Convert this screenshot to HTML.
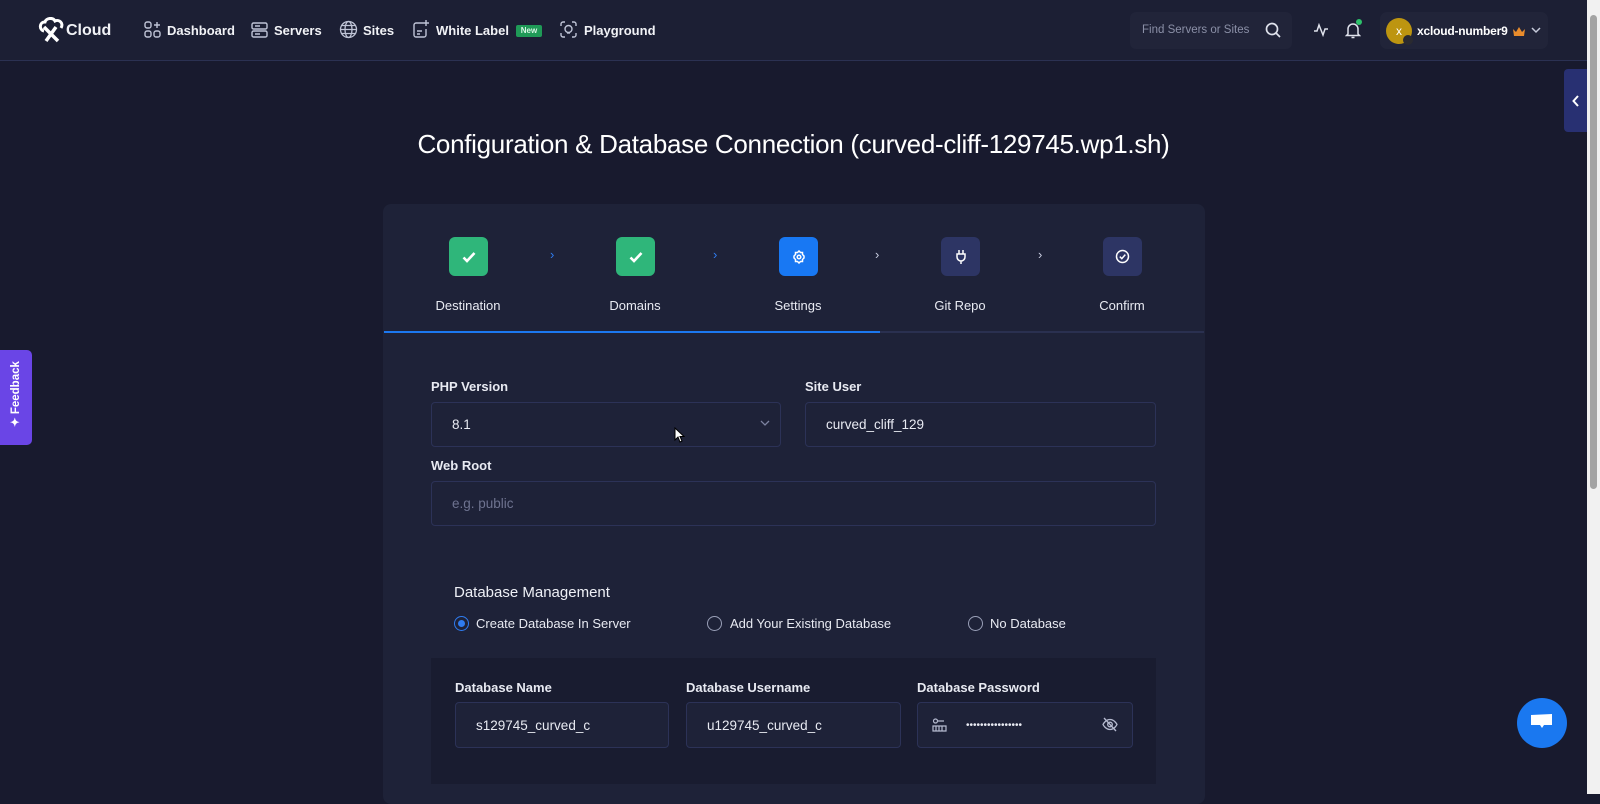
<!DOCTYPE html>
<html><head><meta charset="utf-8"><style>
*{box-sizing:border-box;margin:0;padding:0}
body{width:1600px;height:794px;overflow:hidden;background:#181a2e;font-family:"Liberation Sans",sans-serif;color:#fff;position:relative}
.abs{position:absolute}
.nav{left:0;top:0;width:1587px;height:61px;background:#1c1f34;border-bottom:1px solid #2b3152}
.nl{position:absolute;top:23px;font-size:13px;font-weight:bold;color:#f1f2f6}
.ic{position:absolute;top:21px}
.lbl{position:absolute;font-size:13px;font-weight:bold;color:#e8eaf2}
.inp{position:absolute;border:1px solid #2c3257;border-radius:4px;background:#1e2238;font-size:13.5px;color:#e8eaf2;padding-left:20px;display:flex;align-items:center}
.step{position:absolute;top:237px;width:39px;height:39px;border-radius:6px;display:flex;align-items:center;justify-content:center}
.sl{position:absolute;top:298px;font-size:13px;color:#e8eaf2;transform:translateX(-50%)}
.arr{position:absolute;top:247px;font-size:13px}
.radio{position:absolute;top:616px;width:15px;height:15px;border-radius:50%;border:1.5px solid #9aa0b8}
.rt{position:absolute;top:616px;font-size:13px;color:#e8eaf2}
</style></head><body>
<div class="abs nav"></div>
<svg class="abs" style="left:38px;top:17px" width="28" height="26" viewBox="0 0 28 26"><path d="M6 14 C1 13 1 5 7 5 C8 1 15 0 17 4 C21 2 26 6 23 11" fill="none" stroke="#fff" stroke-width="3"/><path d="M6 10 L20 24 M18 10 L8 24" stroke="#fff" stroke-width="3.5"/></svg>
<div class="nl" style="left:66px;top:22px;font-size:16px">Cloud</div>
<svg class="ic" style="left:144px" width="17" height="17" viewBox="0 0 17 17" fill="none" stroke="#bfc4d6" stroke-width="1.4"><rect x="1" y="1" width="6" height="6" rx="2"/><rect x="1" y="10" width="6" height="6" rx="2"/><rect x="10" y="10" width="6" height="6" rx="2"/><path d="M13 1v6M10 4h6"/></svg>
<div class="nl" style="left:167px">Dashboard</div>
<svg class="ic" style="left:251px" width="17" height="17" viewBox="0 0 17 17" fill="none" stroke="#bfc4d6" stroke-width="1.4"><rect x="1" y="2" width="15" height="6" rx="1.5"/><rect x="1" y="10" width="15" height="6" rx="1.5"/><path d="M4 5h5M4 13h5"/></svg>
<div class="nl" style="left:274px">Servers</div>
<svg class="ic" style="left:339px;top:20px" width="19" height="19" viewBox="0 0 19 19" fill="none" stroke="#bfc4d6" stroke-width="1.3"><circle cx="9.5" cy="9.5" r="8"/><ellipse cx="9.5" cy="9.5" rx="3.5" ry="8"/><path d="M1.5 9.5h16M2.5 5.5h14M2.5 13.5h14"/></svg>
<div class="nl" style="left:363px">Sites</div>
<svg class="ic" style="left:412px;top:19px" width="18" height="20" viewBox="0 0 18 20" fill="none" stroke="#bfc4d6" stroke-width="1.4"><path d="M11 4H4a2 2 0 0 0-2 2v10a2 2 0 0 0 2 2h8a2 2 0 0 0 2-2V10"/><path d="M14 1v6M11 4h6M5 12h5M5 15h3"/></svg>
<div class="nl" style="left:436px">White Label</div>
<div class="abs" style="left:516px;top:25px;width:26px;height:12px;background:#1f9a57;border-radius:2px;font-size:8px;font-weight:bold;color:#d9f5e5;text-align:center;line-height:12px">New</div>
<svg class="ic" style="left:560px;top:21px" width="17" height="17" viewBox="0 0 17 17" fill="none" stroke="#bfc4d6" stroke-width="1.4"><path d="M1 5V3a2 2 0 0 1 2-2h2M12 1h2a2 2 0 0 1 2 2v2M16 12v2a2 2 0 0 1-2 2h-2M5 16H3a2 2 0 0 1-2-2v-2"/><circle cx="8.5" cy="8" r="3.5"/><path d="M7 12h3"/></svg>
<div class="nl" style="left:584px">Playground</div>
<div class="abs" style="left:1130px;top:12px;width:162px;height:37px;background:#212439;border-radius:6px"></div>
<div class="abs" style="left:1142px;top:24px;font-size:11.5px;color:#8b90a7">Find Servers or Sites</div>
<svg class="abs" style="left:1265px;top:22px" width="16" height="16" viewBox="0 0 16 16" fill="none" stroke="#dfe2ec" stroke-width="1.7"><circle cx="7" cy="7" r="5.5"/><path d="M11 11l4 4"/></svg>
<svg class="abs" style="left:1313px;top:23px" width="16" height="14" viewBox="0 0 16 14" fill="none" stroke="#dfe2ec" stroke-width="1.5"><path d="M1 8h3l2-6 4 10 2-6h3"/></svg>
<svg class="abs" style="left:1345px;top:21px" width="16" height="18" viewBox="0 0 16 18" fill="none" stroke="#dfe2ec" stroke-width="1.5"><path d="M3 13V8a5 5 0 0 1 10 0v5l1.5 1.5h-13z M6.5 16.5h3"/></svg>
<div class="abs" style="left:1356px;top:19px;width:6px;height:6px;border-radius:50%;background:#2dc26b"></div>
<div class="abs" style="left:1380px;top:12px;width:168px;height:37px;background:#212439;border-radius:7px"></div>
<div class="abs" style="left:1386px;top:18px;width:26px;height:26px;border-radius:50%;background:#bd9510;font-size:12px;text-align:center;line-height:26px;color:#fff">x</div>
<div class="abs" style="left:1403px;top:35px;width:10px;height:10px;border-radius:50%;background:#2a2a30"></div>
<div class="abs" style="left:1417px;top:24px;font-size:12px;font-weight:bold;letter-spacing:-0.2px">xcloud-number9</div>
<svg class="abs" style="left:1512px;top:26px" width="14" height="11" viewBox="0 0 14 11"><path d="M1 3l3 3 3-5 3 5 3-3-1 7H2z" fill="#e98c2c"/></svg>
<svg class="abs" style="left:1531px;top:26px" width="10" height="8" viewBox="0 0 10 8" fill="none" stroke="#c7cbdb" stroke-width="1.5"><path d="M1 2l4 4 4-4"/></svg>
<div class="abs" style="left:1564px;top:69px;width:23px;height:63px;background:#283072;border-radius:4px 0 0 4px"></div>
<svg class="abs" style="left:1572px;top:95px" width="8" height="12" viewBox="0 0 8 12" fill="none" stroke="#fff" stroke-width="2"><path d="M6 1L1.5 6 6 11"/></svg>
<div class="abs" style="left:1587px;top:0;width:13px;height:794px;background:#f1f1f1"></div>
<div class="abs" style="left:1590px;top:15px;width:7px;height:474px;background:#a3a3a3;border-radius:4px"></div>
<div class="abs" style="left:0;top:350px;width:32px;height:95px;background:#6a45e6;border-radius:0 5px 5px 0"></div>
<div class="abs" style="left:8px;top:427px;transform:rotate(-90deg);transform-origin:0 0;font-size:11.5px;font-weight:bold;white-space:nowrap">✦ Feedback</div>
<div class="abs" style="left:0;width:1587px;top:129px;text-align:center;font-size:26px;letter-spacing:-0.3px;color:#fff">Configuration &amp; Database Connection (curved-cliff-129745.wp1.sh)</div>
<div class="abs" style="left:383px;top:204px;width:822px;height:600px;background:#1e2238;border-radius:8px"></div>
<div class="step" style="left:449px;background:#2fb67a"><svg width="14" height="12" viewBox="0 0 14 12"><path d="M1.5 6.5l3.5 3.5 7.5-8" fill="none" stroke="#fff" stroke-width="2.6"/></svg></div>
<div class="step" style="left:616px;background:#2fb67a"><svg width="14" height="12" viewBox="0 0 14 12"><path d="M1.5 6.5l3.5 3.5 7.5-8" fill="none" stroke="#fff" stroke-width="2.6"/></svg></div>
<div class="step" style="left:779px;background:#1878f3"><svg width="14" height="14" viewBox="0 0 14 14" fill="none" stroke="#fff" stroke-width="1.5"><path d="M7 1l1.5 1.5h2v2L12 6v2l-1.5 1.5v2h-2L7 13l-1.5-1.5h-2v-2L2 8V6l1.5-1.5v-2h2z"/><circle cx="7" cy="7" r="1.8"/></svg></div>
<div class="step" style="left:941px;background:#2d3564"><svg width="12" height="16" viewBox="0 0 12 16" fill="none" stroke="#fff" stroke-width="1.5"><path d="M4 1v4M8 1v4M2 5h8v3a4 4 0 0 1-8 0zM6 12v3"/></svg></div>
<div class="step" style="left:1103px;background:#2d3564"><svg width="15" height="15" viewBox="0 0 15 15" fill="none" stroke="#fff" stroke-width="1.5"><circle cx="7.5" cy="7.5" r="6"/><path d="M4.8 7.6l2 2 3.5-4"/></svg></div>
<div class="arr" style="left:550px;color:#2f7cf0">›</div>
<div class="arr" style="left:713px;color:#2f7cf0">›</div>
<div class="arr" style="left:875px;color:#c9cde0">›</div>
<div class="arr" style="left:1038px;color:#c9cde0">›</div>
<div class="sl" style="left:468px">Destination</div>
<div class="sl" style="left:635px">Domains</div>
<div class="sl" style="left:798px">Settings</div>
<div class="sl" style="left:960px">Git Repo</div>
<div class="sl" style="left:1122px">Confirm</div>
<div class="abs" style="left:384px;top:331px;width:820px;height:2px;background:#2a3050"></div>
<div class="abs" style="left:384px;top:331px;width:496px;height:2px;background:#1c78f0"></div>
<div class="lbl" style="left:431px;top:379px">PHP Version</div>
<div class="lbl" style="left:805px;top:379px">Site User</div>
<div class="inp" style="left:431px;top:402px;width:350px;height:45px">8.1</div>
<svg class="abs" style="left:760px;top:420px" width="10" height="7" viewBox="0 0 10 7" fill="none" stroke="#7d83a0" stroke-width="1.3"><path d="M1 1l4 4 4-4"/></svg>
<svg class="abs" style="left:674px;top:427px" width="11" height="16" viewBox="0 0 11 16"><path d="M1 1v12l3-3 2 5 2-1-2-4.5h4z" fill="#fff" stroke="#000" stroke-width="1"/></svg>
<div class="inp" style="left:805px;top:402px;width:351px;height:45px">curved_cliff_129</div>
<div class="lbl" style="left:431px;top:458px">Web Root</div>
<div class="inp" style="left:431px;top:481px;width:725px;height:45px;color:#6e7390">e.g. public</div>
<div class="abs" style="left:454px;top:584px;font-size:15px;color:#eef0f6">Database Management</div>
<div class="radio" style="left:454px;border:1.5px solid #2f7cf0"><div style="margin:2.5px;width:7px;height:7px;border-radius:50%;background:#2f7cf0"></div></div>
<div class="rt" style="left:476px">Create Database In Server</div>
<div class="radio" style="left:707px"></div>
<div class="rt" style="left:730px">Add Your Existing Database</div>
<div class="radio" style="left:968px"></div>
<div class="rt" style="left:990px">No Database</div>
<div class="abs" style="left:431px;top:658px;width:725px;height:126px;background:#191c30"></div>
<div class="lbl" style="left:455px;top:680px">Database Name</div>
<div class="lbl" style="left:686px;top:680px">Database Username</div>
<div class="lbl" style="left:917px;top:680px">Database Password</div>
<div class="inp" style="left:455px;top:702px;width:214px;height:46px">s129745_curved_c</div>
<div class="inp" style="left:686px;top:702px;width:215px;height:46px">u129745_curved_c</div>
<div class="inp" style="left:917px;top:702px;width:216px;height:46px;padding-left:48px;font-size:10px">••••••••••••••••</div>
<svg class="abs" style="left:932px;top:718px" width="15" height="14" viewBox="0 0 15 14" fill="none" stroke="#b6bbd0" stroke-width="1.2"><circle cx="3.5" cy="3" r="2"/><path d="M6 3h6M1 8h13v5H1zM4 8v5M7 8v5M10 8v5"/></svg>
<svg class="abs" style="left:1102px;top:717px" width="16" height="15" viewBox="0 0 16 15" fill="none" stroke="#b6bbd0" stroke-width="1.3"><path d="M1 7.5s2.5-5 7-5 7 5 7 5-2.5 5-7 5-7-5-7-5z"/><circle cx="8" cy="7.5" r="2.3"/><path d="M2 1l12 13"/></svg>
<div class="abs" style="left:1517px;top:698px;width:50px;height:50px;border-radius:50%;background:#1a78f0"></div>
<svg class="abs" style="left:1530px;top:713px" width="24" height="20" viewBox="0 0 24 20"><path d="M1 2l21-1v11H14l-2 3-2-3H1z" fill="#fff"/></svg>
</body></html>
